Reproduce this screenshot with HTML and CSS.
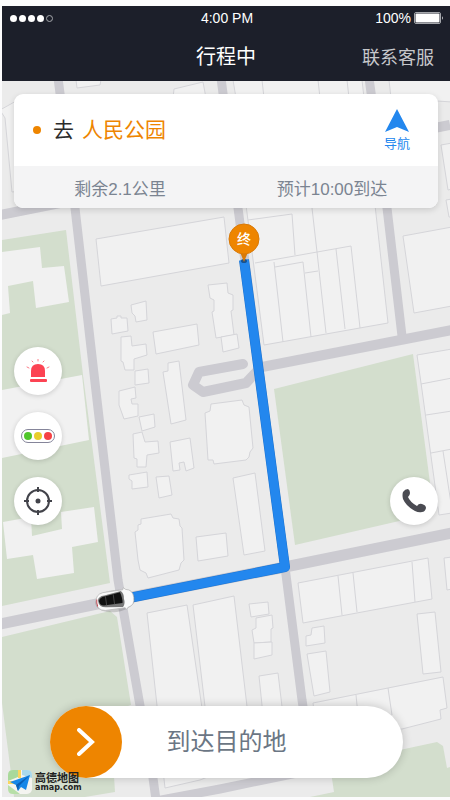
FILE: index.html
```html
<!DOCTYPE html>
<html lang="zh-CN">
<head>
    <meta charset="UTF-8">
    <meta name="viewport" content="width=device-width, initial-scale=1.0">
    <title>行程中</title>
    <link rel="stylesheet" href="styles.css">
</head>
<body>
    <div class="app">
        <header class="header">
            <div class="status-bar">
                <div class="signal">
                    <span class="dot"></span><span class="dot"></span><span class="dot"></span><span class="dot"></span><span class="dot dot-empty"></span>
                </div>
                <span>4:00 PM</span>
                <div class="battery">
                    <span>100%</span>
                    <svg width="30" height="12" viewBox="0 0 30 12" aria-hidden="true">
                        <rect x="0.5" y="0.5" width="26" height="11" rx="1.5" fill="none" stroke="#a5a7ac"/>
                        <rect x="1.5" y="1.5" width="24" height="9" rx="1" fill="#fff"/>
                        <path d="M28 4q1.600 2 0 4z" fill="#fff"/>
                    </svg>
                </div>
            </div>
            <div class="nav-bar">
                <h1 class="title">行程中</h1>
                <a class="service" href="#service">联系客服</a>
            </div>
        </header>

        <main class="trip">
            <svg class="map" viewBox="2 81 448 716" preserveAspectRatio="xMidYMid slice" aria-hidden="true">
                <!-- parks -->
                <g fill="#d3decd">
                    <path d="M2 240L66 230 83 375 110 583 2 606z"/>
                    <path d="M2 637L110 611 117 617 131 705 110 712 115 792 85 797H14L2 703z"/>
                    <path d="M274 389L413 354 434 513 295 545z"/>
                    <path d="M330 765L437 742 443 746 447 768 450 767V797H310L334 792z"/>
                </g>
                <!-- roads -->
                <g fill="none" stroke="#cccbd1" stroke-width="9" stroke-linejoin="round">
                    <path d="M58 78L75 208 97 400 118 580 139 700 153 778 156 800"/>
                    <path d="M221 78L238 208 285 567 302 700 312 765"/>
                    <path d="M369 78L387 208 402 336"/>
                    <path d="M0 215L450 125" stroke-width="10"/>
                    <path d="M262 367L452 330" stroke-width="10"/>
                    <path d="M243 364L199 372 193 385 203 392 246 383 260 368" stroke-width="10" stroke-linecap="round"/>
                    <path d="M0 624L97 604 285 567 452 533" stroke-width="11"/>
                    <path d="M156 801L220 789 297 773"/>
                </g>
                <!-- blocks and buildings -->
                <g fill="#f1f1f1" stroke="#d5d5d9">
                    <path d="M76 80L77 88 100 85 101 80z"/>
                    <path d="M173 98L174 89 203 82 206 98z"/>
                    <path d="M0 110L5 118 12 192 20 191 18 100z"/>
                    <path d="M233 80H362L364 98H236zM262 80L264 98M318 80L320 98M347 80L349 98"/>
                    <path d="M389 80L391 98 452 102V80z"/>
                    <path d="M452 143L441 145 448 190 452 189z"/>
                    <path d="M452 217L449 217 446 200 452 199z"/>
                    <path d="M246 205H375L388 323 264 345z"/>
                    <path d="M248 220L292 214 295 255M255 263L351 246 360 328M274 262L283 342M275 267L303 262 311 337M305 273L318 271M312 208L317 252 326 333M336 249L345 329" fill="none"/>
                    <path d="M452 227L403 236 414 313 452 306z"/>
                    <path d="M452 349L417 355 422 390 439 515 452 513zM421 384L452 378M426 415L452 411M431 453L452 449M443 451L452 510"/>
                    <path d="M96 239L224 217 229 263 101 286z"/>
                    <path d="M131 305L146 301 147 320 136 322 135 316 132 313z"/>
                    <path d="M111 319L117 318V316H121V318H127L128 331 112 334z"/>
                    <path d="M121 337L131 336 132 346 146 344 147 355 134 359V370H125L123 362 121 361z"/>
                    <path d="M135 371L148 369 149 383 135 385z"/>
                    <path d="M153 332L197 324 199 345 156 354z"/>
                    <path d="M163 372L168 371V363L179 361 186 420 171 424z"/>
                    <path d="M208 285L227 283 228 293 233 295V310L231 311 234 335 216 338 212 312 214 311V300L210 298z"/>
                    <path d="M221 337L237 334 239 348 223 352z"/>
                    <path d="M119 391L135 387 136 398 131 399 132 404H138V416L124 419 119 405z"/>
                    <path d="M139 417L154 414 155 427 142 431z"/>
                    <path d="M133 434L142 432 145 442 158 441 159 453 147 455 146 467H137V459L134 458z"/>
                    <path d="M170 442L190 438 194 468 186 471 184 462 179 463 180 470 173 471z"/>
                    <path d="M129 475L147 472 148 487 132 489V481L129 479z"/>
                    <path d="M156 477L169 476 172 495 159 498z"/>
                    <path d="M141 519L171 514 173 518 179 519 180 526 182 528 184 560 181 563 179 570 148 578 146 573 140 570 138 560 135 532 138 530V525L141 524z"/>
                    <path d="M196 537L226 533 228 556 198 561z"/>
                    <path d="M211 404L242 400 244 405 249 407 253 448 250 452 249 457 246 460 214 464 213 460H208L205 413 210 411z"/>
                    <path d="M233 478L255 473 265 551 244 555z"/>
                    <path d="M147 613L187 605 203 715H158z"/>
                    <path d="M193 605L234 596 248 715H206z"/>
                    <path d="M249 604L268 602 269 614 251 617z"/>
                    <path d="M256 618L272 615 273 628 271 629V642L254 643 252 630 256 628z"/>
                    <path d="M254 643L272 642V655L254 659z"/>
                    <path d="M259 676L278 673 283 715H263z"/>
                    <path d="M298 583L428 558 432 599 303 623zM338 576L342 615M353 573L357 612M412 562L415 602"/>
                    <path d="M452 557L444 558 447 590 452 589z"/>
                    <path d="M306 636L311 635 312 628 324 626 325 643 306 646z"/>
                    <path d="M307 654L326 651 330 692 314 696z"/>
                    <path d="M417 614L435 612 441 672 423 674z"/>
                    <path d="M313 703L443 677 447 708 440 710 441 719 402 729H316zM356 695L358 715M388 688L392 715"/>
                    <path d="M163 770H225L200 780 165 788z"/>
                </g>
                <g fill="#f1f1f1">
                    <path d="M2 252L40 247 42 268 64 266 69 302 36 308 33 281 8 286 10 313 2 315z"/>
                    <path d="M2 390L82 375 89 440 2 458z"/>
                    <path d="M3 522L31 517 32 536 62 529 61 512 94 507 98 542 72 547 74 573 37 579 33 555 7 559z"/>
                </g>
                <!-- route -->
                <g fill="none" stroke-linejoin="round">
                    <path d="M244 260L285 567 124 599" stroke="#1c74d2" stroke-width="10"/>
                    <path d="M244 260L285 567 124 599" stroke="#2387ee" stroke-width="9"/>
                </g>
                <ellipse cx="244" cy="261" rx="3" ry="2" fill="#17518f"/>
                <path d="M240 252L244 262 248 252z" fill="#d97a08"/>
                <circle cx="244" cy="239" r="15" fill="#ee8500" stroke="#d97a08"/>
                <text class="pin-text" x="244" y="244" text-anchor="middle">终</text>
                <!-- car -->
                <g transform="translate(115 600) rotate(-8)">
                    <ellipse cx="0" cy="1" rx="20" ry="11" fill="#000" opacity="0.15"/>
                    <path d="M-19 0Q-19-8-11-9L9-9 10-11 12-9Q19-8 19 0 19 8 12 9L10 11 9 9H-11Q-19 8-19 0z" fill="#fafafa" stroke="#b5b5b5" stroke-width="0.700"/>
                    <path d="M-17-2Q-16-6-10-6L7-8Q10-5 9 0 10 5 7 8L-10 6Q-17 5-17-2z" fill="#777"/>
                    <path d="M-16-1Q-15-5-9-5L6-7Q8 0 7 4L-10 4Q-16 4-16-1z" fill="#111"/>
                    <path d="M-9-5V4M-1-6V4" stroke="#444"/>
                    <path d="M-18-3Q-19 1-18 4" fill="none" stroke="#c44a55"/>
                </g>
            </svg>

            <section class="card">
                <div class="card-top">
                    <span class="bullet"></span>
                    <p class="destination"><span>去</span><span class="place">人民公园</span></p>
                    <button class="navigate" type="button">
                        <svg width="24" height="24" viewBox="0 0 24 24" aria-hidden="true"><path d="M12 0L24 23 12 18 0 23z" fill="#2387ee"/></svg>
                        导航
                    </button>
                </div>
                <div class="card-info">
                    <span>剩余2.1公里</span>
                    <span>预计10:00到达</span>
                </div>
            </section>

            <div class="tools">
                <div class="tools-left">
                    <button class="round-button" type="button" aria-label="报警">
                        <svg width="24" height="24" viewBox="0 0 24 24" aria-hidden="true">
                            <path d="M5 18V12Q5 5 12 5T19 12V18z" fill="#fc4353"/>
                            <rect x="4" y="20" width="17" height="3" rx="1" fill="#fc4353"/>
                            <path d="M12 0V2M6 2L7 3M18 2L17 3M1 8L3 9M23 8L21 9" stroke="#fc7c87" stroke-linecap="round"/>
                        </svg>
                    </button>
                    <button class="round-button" type="button" aria-label="路况">
                        <svg width="34" height="14" viewBox="0 0 34 14" aria-hidden="true">
                            <rect x="0.500" y="0.500" width="33" height="13" rx="6.500" fill="#fff" stroke="#85859a"/>
                            <circle cx="7" cy="7" r="4" fill="#50c62b"/>
                            <circle cx="17" cy="7" r="4" fill="#e8ce2b"/>
                            <circle cx="27" cy="7" r="4" fill="#f54144"/>
                        </svg>
                    </button>
                    <button class="round-button" type="button" aria-label="定位">
                        <svg width="30" height="30" viewBox="0 0 30 30" fill="none" stroke="#42434a" stroke-width="2" aria-hidden="true">
                            <circle cx="15" cy="15" r="11"/>
                            <path d="M15 1V6M15 24V29M1 15H6M24 15H29"/>
                            <circle cx="15" cy="15" r="2.500" fill="#42434a" stroke="none"/>
                        </svg>
                    </button>
                </div>
                <button class="round-button" type="button" aria-label="电话">
                    <svg width="24" height="24" viewBox="0 0 24 24" aria-hidden="true">
                        <path d="M1 3Q3 0 6 0 8 1 8 4 8 6 6 8 8 13 15 17 17 14 20 15 24 16 24 19 23 23 20 23 17 24 13 22 4 17 1 10 0 6 1 3z" fill="#4a4b52"/>
                    </svg>
                </button>
            </div>

            <button class="arrive" type="button">
                <span class="knob">
                    <svg width="18" height="28" viewBox="0 0 18 28" aria-hidden="true"><path d="M2 2L15 14 2 26" fill="none" stroke="#fff" stroke-width="4" stroke-linecap="round"/></svg>
                </span>
                <span class="arrive-text">到达目的地</span>
            </button>

            <div class="amap">
                <svg width="24" height="24" viewBox="0 0 24 24" aria-hidden="true">
                    <rect width="24" height="24" rx="5" fill="#f4f4f0"/>
                    <path d="M0 5Q0 0 5 0H10V7L0 11z" fill="#a9d99b"/>
                    <path d="M14 0H19Q24 0 24 5V8L14 5z" fill="#a9d9ec"/>
                    <path d="M0 15L12 24H5Q0 24 0 19z" fill="#b7dfa8"/>
                    <path d="M10 0H13V8H10zM0 11H6V14H0z" fill="#fbd65f"/>
                    <path d="M22 5L2 12 8 15 10 21 13 17 18 20z" fill="#1687e8"/>
                    <path d="M22 5L8 15 10 21 11 16z" fill="#0a5fb4"/>
                </svg>
                <div class="amap-text">
                    <span class="amap-name">高德地图</span>
                    <span class="amap-site">amap.com</span>
                </div>
            </div>
        </main>
    </div>
</body>
</html>
```
FILE: styles.css
```css
* {
    box-sizing: border-box;
}

body {
    margin: 0;
    background: #fcfcfd;
    font-family: 'Liberation Sans', 'Noto Sans CJK SC', sans-serif;
}

button {
    border: none;
    padding: 0;
    font-family: inherit;
    cursor: pointer;
}

.app {
    display: flex;
    flex-direction: column;
    min-height: 100vh;
    padding: 6px 0 3px 2px;
}

.header {
    background: #1c1f2a;
    color: #fff;
}

.status-bar,
.nav-bar {
    display: grid;
    grid-template-columns: 1fr auto 1fr;
    align-items: center;
}

.status-bar {
    height: 24px;
    padding: 0 6px 0 8px;
    font-size: 14px;
}

.signal {
    display: flex;
    gap: 2px;
}

.dot {
    width: 7px;
    height: 7px;
    border-radius: 50%;
    background: #fff;
}

.dot-empty {
    background: none;
    border: 1px solid #a5a7ac;
}

.battery {
    display: flex;
    justify-content: flex-end;
    align-items: center;
    gap: 3px;
}

.nav-bar {
    height: 51px;
    padding: 0 16px;
}

.title {
    grid-column: 2;
    margin: 0;
    font-size: 20px;
    font-weight: normal;
}

.service {
    justify-self: end;
    color: #c6c7cb;
    font-size: 18px;
    text-decoration: none;
}

.trip {
    position: relative;
    flex: 1;
    display: flex;
    flex-direction: column;
    padding: 13px 12px 19px;
    background: #ebebeb;
}

.map {
    position: absolute;
    top: 0;
    left: 0;
    width: 100%;
    height: 100%;
}

.pin-text {
    fill: #fff;
    font-size: 14px;
    font-weight: 500;
}

.card,
.tools,
.arrive {
    position: relative;
}

.card {
    border-radius: 9px;
    overflow: hidden;
    background: #fff;
    box-shadow: 0 2px 6px rgba(0, 0, 0, 0.14);
}

.card-top {
    display: flex;
    align-items: center;
    height: 72px;
    padding: 0 28px 0 19px;
}

.bullet {
    width: 8px;
    height: 8px;
    margin-right: 12px;
    border-radius: 50%;
    background: #ee8500;
}

.destination {
    flex: 1;
    display: flex;
    gap: 8px;
    margin: 0;
    color: #2b2b2b;
    font-size: 21px;
    line-height: 28px;
}

.place {
    color: #ee8500;
}

.navigate {
    display: flex;
    flex-direction: column;
    align-items: center;
    gap: 3px;
    background: none;
    color: #2387ee;
    font-size: 13px;
    line-height: 16px;
}

.card-info {
    display: grid;
    grid-template-columns: 1fr 1fr;
    align-items: center;
    height: 42px;
    background: #f4f4f5;
    color: #7b8491;
    font-size: 17px;
    text-align: center;
}

.tools {
    display: flex;
    justify-content: space-between;
    align-items: flex-end;
    margin-top: 139px;
}

.tools-left {
    display: flex;
    flex-direction: column;
    gap: 17px;
}

.round-button {
    display: flex;
    justify-content: center;
    align-items: center;
    width: 48px;
    height: 48px;
    border-radius: 50%;
    background: #fff;
    box-shadow: 0 1px 5px rgba(0, 0, 0, 0.16);
}

.arrive {
    display: flex;
    align-items: center;
    margin: auto 35px 0 36px;
    border-radius: 36px;
    background: #fff;
    box-shadow: 0 0 10px rgba(0, 0, 0, 0.2);
}

.knob {
    display: flex;
    justify-content: center;
    align-items: center;
    width: 72px;
    height: 72px;
    border-radius: 50%;
    background: #ee8500;
}

.arrive-text {
    flex: 1;
    padding-right: 72px;
    color: #6b7684;
    font-size: 24px;
    line-height: 32px;
}

.amap {
    position: absolute;
    left: 6px;
    bottom: 3px;
    display: flex;
    align-items: center;
    gap: 3px;
    color: #222;
    font-weight: bold;
}

.amap-text {
    display: flex;
    flex-direction: column;
}

.amap-name {
    font-size: 11px;
    line-height: 12px;
}

.amap-site {
    font-family: 'DejaVu Sans', sans-serif;
    font-size: 8px;
    line-height: 8px;
}
```
